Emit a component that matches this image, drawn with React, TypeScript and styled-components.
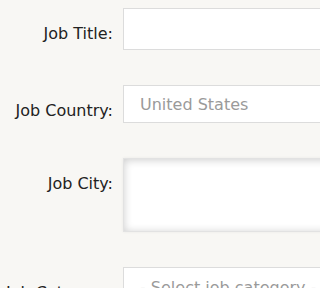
import React from 'react';
import styled, { createGlobalStyle } from 'styled-components';

const GlobalStyle = createGlobalStyle`
  html, body {
    margin: 0;
    padding: 0;
    background: #f8f7f4;
    overflow: hidden;
  }
  body {
    font-family: "DejaVu Sans", "Liberation Sans", sans-serif;
  }
`;

const Page = styled.div`
  width: 100vw;
  height: 100vh;
  overflow: hidden;
`;

const Form = styled.form`
  padding-top: 8px;
  width: 480px;
`;

const Row = styled.div`
  display: grid;
  grid-template-columns: 113px 340px;
  column-gap: 10px;
  align-items: start;
  margin-bottom: 35px;
`;

const Label = styled.label`
  display: block;
  text-align: right;
  font-size: 16px;
  line-height: 20px;
  padding-top: 16px;
  color: #222;
  white-space: nowrap;
`;

const fieldBase = `
  box-sizing: border-box;
  display: block;
  width: 100%;
  margin: 0;
  border: 1px solid #dcdcdc;
  background: #fff;
  font-family: "DejaVu Sans", "Liberation Sans", sans-serif;
  font-size: 16px;
  outline: none;
`;

const TextInput = styled.input`
  ${fieldBase}
  height: 42px;
  padding: 0 16px;
  color: #333;
`;

const Select = styled.select<{ $height: number }>`
  ${fieldBase}
  appearance: none;
  height: ${(p) => p.$height}px;
  padding: 0 16px;
  color: #9a9a9a;
`;

const TextArea = styled.textarea`
  ${fieldBase}
  height: 74px;
  padding: 10px 16px;
  resize: none;
  border-color: #e2e2e2;
  box-shadow: inset 0 1px 9px rgba(0, 0, 0, 0.2), 0 0 3px rgba(0, 0, 0, 0.06);
`;

export default function App() {
  return (
    <>
      <GlobalStyle />
      <Page>
        <Form>
          <Row>
            <Label htmlFor="title">Job Title:</Label>
            <TextInput id="title" type="text" />
          </Row>
          <Row>
            <Label htmlFor="country">Job Country:</Label>
            <Select id="country" $height={38} defaultValue="us">
              <option value="us">United States</option>
            </Select>
          </Row>
          <Row>
            <Label htmlFor="city">Job City:</Label>
            <TextArea id="city" />
          </Row>
          <Row>
            <Label htmlFor="category">Job Category:</Label>
            <Select id="category" $height={40} defaultValue="">
              <option value="">- Select job category -</option>
            </Select>
          </Row>
        </Form>
      </Page>
    </>
  );
}
